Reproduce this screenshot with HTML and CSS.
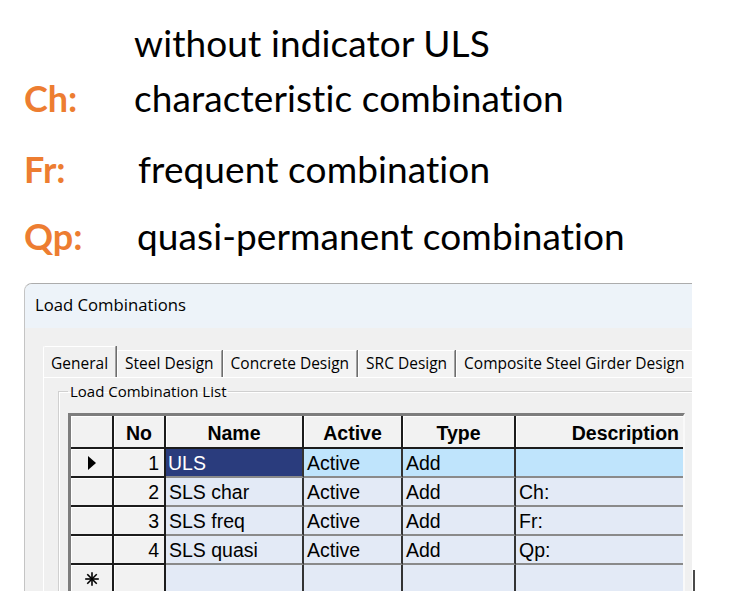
FILE: index.html
```html
<!DOCTYPE html>
<html>
<head>
<meta charset="utf-8">
<link rel="stylesheet" href="styles.css">
</head>
<body>
<div class="legend">
  <div class="row"><span class="lbl"></span><span class="txt">without indicator ULS</span></div>
  <div class="row"><span class="lbl">Ch:</span><span class="txt">characteristic combination</span></div>
  <div class="row"><span class="lbl">Fr:</span><span class="txt t3">frequent combination</span></div>
  <div class="row"><span class="lbl">Qp:</span><span class="txt t4">quasi-permanent combination</span></div>
</div>
<div class="stage">
  <div class="window">
    <div class="titlebar">Load Combinations</div>
    <div class="client">
      <div class="tabs">
        <div class="tab active">General</div>
        <div class="tab">Steel Design</div>
        <div class="tab">Concrete Design</div>
        <div class="tab">SRC Design</div>
        <div class="tab">Composite Steel Girder Design</div>
      </div>
      <div class="panel">
        <fieldset class="group">
          <legend>Load Combination List</legend>
          <div class="grid">
            <div class="c h"></div>
            <div class="c h">No</div>
            <div class="c h">Name</div>
            <div class="c h">Active</div>
            <div class="c h">Type</div>
            <div class="c h desc">Description</div>

            <div class="c rh mark"><svg width="8" height="14" viewBox="0 0 8 14"><polygon points="0,0 8,7 0,14" fill="#000"/></svg></div>
            <div class="c rh num">1</div>
            <div class="c d cur">ULS</div>
            <div class="c d sel">Active</div>
            <div class="c d sel">Add</div>
            <div class="c d sel last"></div>

            <div class="c rh"></div>
            <div class="c rh num">2</div>
            <div class="c d">SLS char</div>
            <div class="c d">Active</div>
            <div class="c d">Add</div>
            <div class="c d last">Ch:</div>

            <div class="c rh"></div>
            <div class="c rh num">3</div>
            <div class="c d">SLS freq</div>
            <div class="c d">Active</div>
            <div class="c d">Add</div>
            <div class="c d last">Fr:</div>

            <div class="c rh"></div>
            <div class="c rh num">4</div>
            <div class="c d">SLS quasi</div>
            <div class="c d">Active</div>
            <div class="c d">Add</div>
            <div class="c d last">Qp:</div>

            <div class="c rh mark"><svg width="14" height="14" viewBox="0 0 14 14"><g stroke="#000" stroke-width="1.6" stroke-linecap="square"><line x1="7" y1="1" x2="7" y2="13"/><line x1="1" y1="7" x2="13" y2="7"/><line x1="2.8" y1="2.8" x2="11.2" y2="11.2"/><line x1="11.2" y1="2.8" x2="2.8" y2="11.2"/></g></svg></div>
            <div class="c rh"></div>
            <div class="c d"></div>
            <div class="c d"></div>
            <div class="c d"></div>
            <div class="c d last"></div>
          </div>
        </fieldset>
      </div>
    </div>
  </div>
  <div class="caret"></div>
</div>
</body>
</html>
```

FILE: styles.css
```css
html, body {
  margin: 0;
  padding: 0;
  background: #ffffff;
}
body {
  width: 731px;
  height: 616px;
  overflow: hidden;
}

/* ---- legend text ---- */
.legend {
  display: grid;
  grid-template-rows: 55px 71px 67px 40px;
  padding: 23px 0 0 24px;
  font-family: Lato, "Open Sans", sans-serif;
  font-size: 37px;
  line-height: 40px;
  color: #000;
}
.row {
  display: flex;
  height: 40px;
}
.lbl {
  width: 110px;
  flex: none;
  color: #ed7d31;
  font-weight: 700;
  font-size: 36px;
}
.txt { white-space: nowrap; letter-spacing: 0.1px; }
.t3 { padding-left: 4px; }
.t4 { padding-left: 3px; }

/* ---- window ---- */
.stage {
  display: flex;
  align-items: flex-end;
  margin-top: 27px;
  padding-left: 24px;
}
.window {
  width: 668px;
  height: 308px;
  box-sizing: border-box;
  border-top: 1px solid #acacac;
  border-left: 1px solid #c4c4c4;
  border-top-left-radius: 8px;
  background: #f0f0f0;
  overflow: hidden;
  font-family: "Open Sans", "Noto Sans", sans-serif;
  color: #000;
}
.caret {
  width: 2px;
  height: 21px;
  margin-left: 1px;
  background: #4a4a4a;
  flex: none;
}
.titlebar {
  height: 44px;
  background: #edf3f9;
  font-size: 16.7px;
  line-height: 42px;
  padding-left: 10px;
  white-space: nowrap;
}
.client {
  padding: 18px 0 0 18px;
}
.tabs {
  display: flex;
  align-items: flex-end;
  height: 31px;
}
.tab {
  flex: none;
  height: 27px;
  box-sizing: border-box;
  padding: 0 7px 0 7px;
  font-size: 15.5px;
  line-height: 25px;
  border-top: 1px solid #ffffff;
  border-left: 1px solid #ffffff;
  border-right: 1px solid #a0a0a0;
  box-shadow: 1px 0 0 #6e6e6e;
  margin-right: 1px;
  white-space: nowrap;
  background: #f3f3f3;
}
.tab.active {
  height: 31px;
  padding-top: 4px;
  background: #f0f0f0;
  border-top-left-radius: 2px;
}
.panel {
  border-top: 1px solid #ffffff;
  border-left: 1px solid #ffffff;
  height: 240px;
}
.group {
  margin: 3px 0 0 14px;
  padding: 11px 0 0 9px;
  border: 1px solid #d0d0d0;
  border-right: none;
  border-bottom: none;
  min-width: 0;
  box-shadow: inset 1px 1px 0 #ffffff;
}
.group legend {
  padding: 0 2px;
  font-size: 15px;
  line-height: 21px;
}

/* ---- data grid ---- */
.grid {
  display: grid;
  grid-template-columns: 43px 52px 138px 99px 113px 167px;
  grid-template-rows: 33px repeat(5, 29px);
  width: max-content;
  border-top: 3px solid #7d7d7d;
  border-left: 3px solid #7d7d7d;
  border-right: 2px solid #f9f9f9;
  font-family: "Liberation Sans", Arial, sans-serif;
  font-size: 19.5px;
  color: #000;
}
.c {
  box-sizing: border-box;
  display: flex;
  align-items: center;
  padding-top: 2px;
  white-space: nowrap;
  overflow: hidden;
}
.h, .rh {
  background: #f2f2f2;
  border-right: 2px solid #1c1c1c;
  border-bottom: 2px solid #1c1c1c;
  box-shadow: inset 1px 1px 0 #ffffff;
}
.h {
  font-weight: 700;
  justify-content: center;
  padding-top: 3px;
}
.h.desc {
  justify-content: flex-end;
  padding-right: 4px;
  border-right: none;
}
.rh.mark {
  justify-content: center;
  padding-top: 0;
}
.rh.num {
  justify-content: flex-end;
  padding-right: 5px;
}
.d {
  background: #e3eaf6;
  border-right: 2px solid #333333;
  border-bottom: 2px solid #8a8a8a;
  padding-left: 3px;
}
.d.last {
  border-right: none;
}
.d.sel {
  background: #bfe4fc;
}
.d.cur {
  background: #2a3c7d;
  color: #ffffff;
  padding-left: 2px;
}
```
